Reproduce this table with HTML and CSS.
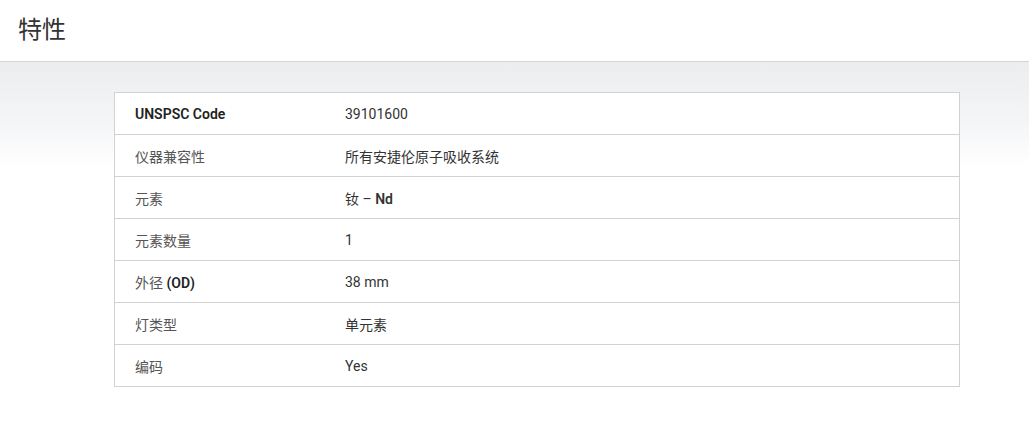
FILE: index.html
```html
<!DOCTYPE html>
<html lang="zh">
<head>
<meta charset="utf-8">
<title>特性</title>
<link rel="stylesheet" href="styles.css">
</head>
<body>
<header class="page-header">
  <h1 class="title">特性</h1>
</header>
<section class="content">
  <table class="specs">
    <tbody>
      <tr><th class="label strong">UNSPSC Code</th><td class="value">39101600</td></tr>
      <tr><th class="label">仪器兼容性</th><td class="value">所有安捷伦原子吸收系统</td></tr>
      <tr><th class="label">元素</th><td class="value">钕 – <b class="med">Nd</b></td></tr>
      <tr><th class="label">元素数量</th><td class="value">1</td></tr>
      <tr><th class="label">外径 <b class="strong-inline">(OD)</b></th><td class="value">38 mm</td></tr>
      <tr><th class="label">灯类型</th><td class="value">单元素</td></tr>
      <tr><th class="label">编码</th><td class="value">Yes</td></tr>
    </tbody>
  </table>
</section>
</body>
</html>
```
FILE: styles.css
```css
html, body {
  margin: 0;
  padding: 0;
  background: #fff;
  font-family: Roboto, "Noto Sans CJK SC", sans-serif;
  color: #333;
}
.page-header {
  height: 61px;
  border-bottom: 1px solid #d4d4d4;
  display: flex;
  align-items: center;
  padding-left: 18px;
}
.title {
  margin: 0;
  font-weight: 400;
  font-size: 24px;
  color: #333;
  font-family: "Noto Sans CJK SC", sans-serif;
  position: relative;
  top: -3px;
}
.content {
  background: linear-gradient(to bottom, #ecedef 0px, #f4f5f6 60px, #ffffff 105px);
  padding: 30px 0 40px 114px;
}
.specs {
  width: 846px;
  border-collapse: collapse;
  background: #fff;
  border: 1px solid #d2d2d2;
  font-size: 14px;
}
.specs tr {
  height: 42px;
  border-bottom: 1px solid #d2d2d2;
}
.label {
  text-align: left;
  font-weight: 400;
  color: #555;
  width: 210px;
  padding: 0 0 0 20px;
  font-family: Roboto, "Noto Sans CJK SC", sans-serif;
}
.label.strong { font-weight: 600; color: #222; }
.strong-inline { font-weight: 600; color: #222; }
.value {
  padding: 0;
  color: #333;
  font-family: Roboto, "Noto Sans CJK SC", sans-serif;
}
.med { font-weight: 600; }
```
